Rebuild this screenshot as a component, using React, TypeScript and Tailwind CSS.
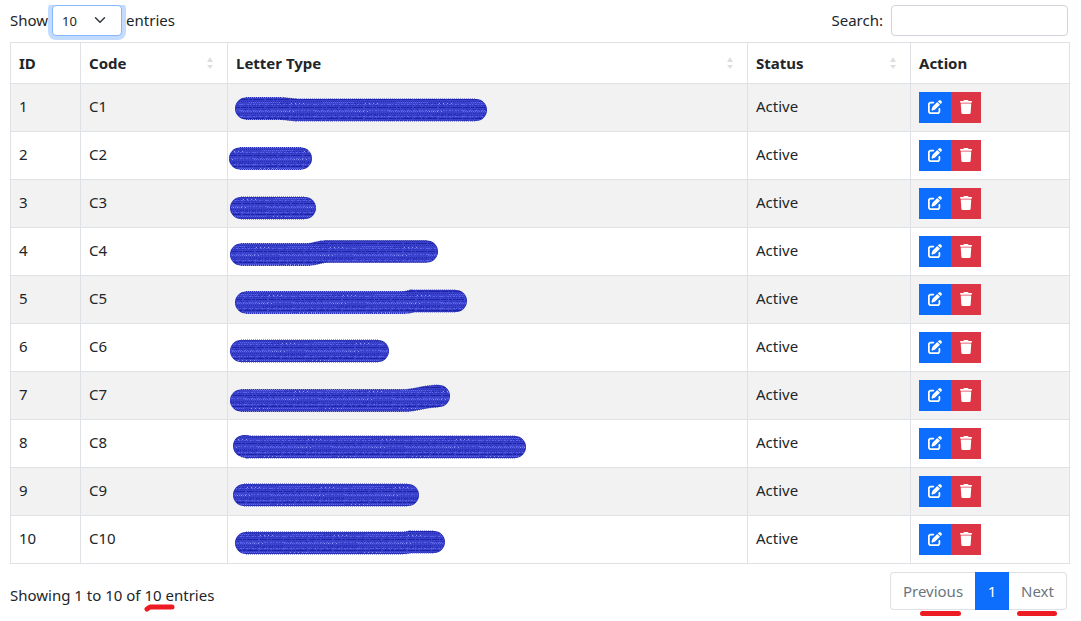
import { useState } from "react";
import { FaPenToSquare, FaTrash } from "react-icons/fa6";

type Letter = {
  id: number;
  code: string;
  status: string;
  mark: string;
};

// mark = brush path that hides the letter type name
const letters: Letter[] = [
  { id: 1, code: "C1", status: "Active", mark: "M18 24.5H54L68 26H248" },
  { id: 2, code: "C2", status: "Active", mark: "M12 26.5H73" },
  { id: 3, code: "C3", status: "Active", mark: "M13 28H77" },
  { id: 4, code: "C4", status: "Active", mark: "M13 26.5H82L96 23.5H199" },
  { id: 5, code: "C5", status: "Active", mark: "M18 26.5H178L184 25H228" },
  { id: 6, code: "C6", status: "Active", mark: "M13 27H150" },
  { id: 7, code: "C7", status: "Active", mark: "M13 28.5H176C188 28.5 196 24 211 24" },
  { id: 8, code: "C8", status: "Active", mark: "M16 26L20 27H287" },
  { id: 9, code: "C9", status: "Active", mark: "M16 27H180" },
  { id: 10, code: "C10", status: "Active", mark: "M18 27H176L182 26H206" },
];

function BrushMark({ id, path }: { id: number; path: string }) {
  const pattern = `brush-${id}`;
  return (
    <svg className="block h-[47px] w-[300px]" viewBox="0 0 300 47" fill="none" aria-hidden="true">
      <defs>
        <pattern id={pattern} width="74" height="24" patternUnits="userSpaceOnUse" x={id * 13} y="15">
          <rect width="74" height="24" fill="#3a42cc" />
          <g strokeWidth="1">
            <path d="M0 .5H74M0 8.5H74M0 19.5H74" stroke="#1d22a6" strokeDasharray="7 1 3 1 11 2" />
            <path d="M0 2.5H74M0 14.5H74M0 22.5H74" stroke="#242bb4" strokeDasharray="1 1" />
            <path d="M0 5.5H74M0 11.5H74M0 17.5H74" stroke="#5a62ea" strokeDasharray="2 1 1 2" />
            <path d="M0 6.5H74M0 16.5H74" stroke="#2a31bd" strokeDasharray="1 2 4 1" />
            <path d="M0 10.5H30M44 15.5H74M12 18.5H48M30 4.5H62" stroke="#252cb6" strokeDasharray="1 2 2 1" />
            <path d="M0 12.5H50M20 21.5H74M8 3.5H40" stroke="#5f68ee" strokeDasharray="1 1" />
            <path d="M6 21.5H26M40 12.5H56M50 4.5H66" stroke="#8f97fa" strokeDasharray="1 3" />
          </g>
        </pattern>
      </defs>
      <g strokeLinejoin="round">
        <path d={path} stroke="#2f36c0" strokeWidth="23" strokeDasharray="1 1" />
        <path d={path} stroke="#2027ad" strokeWidth="22" strokeLinecap="round" />
        <path d={path} stroke={`url(#${pattern})`} strokeWidth="21" strokeLinecap="round" />
      </g>
    </svg>
  );
}

function SortIcon() {
  return (
    <svg className="h-3 w-2" viewBox="0 0 8 12" fill="#dedede" aria-hidden="true">
      <path d="M4 0L7 5H1zM1 8H7L4 12z" />
    </svg>
  );
}

function Underline({ className }: { className: string }) {
  return (
    <svg className={className} viewBox="0 0 40 5" preserveAspectRatio="none" aria-hidden="true">
      <path d="M2.5 2.5H37.5" stroke="#ed1c24" strokeWidth="5" strokeLinecap="round" />
    </svg>
  );
}

export default function App() {
  const [size, setSize] = useState("10");
  const [search, setSearch] = useState("");

  const rows = letters.filter((l) =>
    `${l.id} ${l.code} ${l.status}`.toLowerCase().includes(search.toLowerCase())
  );

  return (
    <main className="mt-[5px] overflow-hidden bg-white pr-[11px] pl-[10px] font-['Noto_Sans',sans-serif] text-[15px] leading-6 text-[#212529]">
      <div className="flex items-start justify-between pr-[2px]">
        <div className="flex items-start">
          <label htmlFor="page-size" className="pt-[3px]">Show</label>
          <div className="relative mx-1">
            <select
              id="page-size"
              value={size}
              onChange={(e) => setSize(e.target.value)}
              className="block h-[31px] w-[70px] appearance-none rounded-sm border border-[#86b7fe] bg-white px-[9px] text-[13px] ring-4 ring-[#0d6efd]/25 outline-none"
            >
              <option>10</option>
              <option>25</option>
              <option>50</option>
              <option>100</option>
            </select>
            <svg
              className="pointer-events-none absolute top-[9px] right-4 h-3 w-3"
              viewBox="0 0 16 16"
              fill="none"
              stroke="#343a40"
              strokeWidth="2"
              strokeLinecap="round"
              strokeLinejoin="round"
              aria-hidden="true"
            >
              <path d="M2 5l6 6 6-6" />
            </svg>
          </div>
          <label htmlFor="page-size" className="pt-[3px]">entries</label>
        </div>
        <div className="flex items-start gap-2">
          <label htmlFor="search" className="pt-[3px]">Search:</label>
          <input
            id="search"
            type="search"
            value={search}
            onChange={(e) => setSearch(e.target.value)}
            className="h-[31px] w-[177px] rounded-sm border border-[#ced4da] bg-white px-2 text-sm outline-none"
          />
        </div>
      </div>

      <table className="mt-[6px] w-full table-fixed border-collapse border border-[#dee2e6] text-left">
        <colgroup>
          <col className="w-[70px]" />
          <col className="w-[147px]" />
          <col />
          <col className="w-[163px]" />
          <col className="w-[159px]" />
        </colgroup>
        <thead>
          <tr className="h-[41px]">
            {["ID", "Code", "Letter Type", "Status", "Action"].map((title) => (
              <th key={title} className="border border-[#dee2e6] px-2 font-bold">
                <div className="flex items-center justify-between pr-[5px]">
                  {title}
                  {title !== "ID" && title !== "Action" && <SortIcon />}
                </div>
              </th>
            ))}
          </tr>
        </thead>
        <tbody>
          {rows.map((letter) => (
            <tr key={letter.id} className="h-12 align-top odd:bg-[#f2f2f2]">
              <td className="border border-[#dee2e6] px-2 pt-[10px]">{letter.id}</td>
              <td className="border border-[#dee2e6] px-2 pt-[10px]">{letter.code}</td>
              <td className="border border-[#dee2e6] p-0">
                <BrushMark id={letter.id} path={letter.mark} />
              </td>
              <td className="border border-[#dee2e6] px-2 pt-[10px]">{letter.status}</td>
              <td className="border border-[#dee2e6] px-2 align-middle">
                <div className="flex text-sm text-white">
                  <button aria-label={`Edit ${letter.code}`} className="flex h-[31px] w-8 items-center justify-center bg-[#0d6efd] pb-px">
                    <FaPenToSquare />
                  </button>
                  <button aria-label={`Delete ${letter.code}`} className="flex h-[31px] w-[30px] items-center justify-center bg-[#dc3545] pb-px">
                    <FaTrash />
                  </button>
                </div>
              </td>
            </tr>
          ))}
        </tbody>
      </table>

      <div className="flex items-start justify-between pt-2 pr-[3px] pb-3">
        <p className="pt-[11px]">
          Showing 1 to 10 of{" "}
          <span className="relative">
            10
            <svg className="absolute top-[19px] left-0 h-2 w-8" viewBox="0 0 32 8" fill="none" aria-hidden="true">
              <path d="M3 5L6 3H28" stroke="#ed1c24" strokeWidth="5" strokeLinecap="round" strokeLinejoin="round" />
            </svg>
          </span>{" "}
          entries
        </p>
        <nav aria-label="Pages" className="flex h-[38px] text-[#6c757d]">
          <button className="relative w-[85px] rounded-l border border-r-0 border-[#dee2e6]">
            Previous
            <Underline className="absolute top-[38px] left-[29px] h-[5px] w-[41px]" />
          </button>
          <button aria-current="page" className="w-[34px] bg-[#0d6efd] text-white">
            1
          </button>
          <button className="relative w-[58px] rounded-r border border-l-0 border-[#dee2e6]">
            Next
            <Underline className="absolute top-[38px] left-2 h-[5px] w-10" />
          </button>
        </nav>
      </div>
    </main>
  );
}
